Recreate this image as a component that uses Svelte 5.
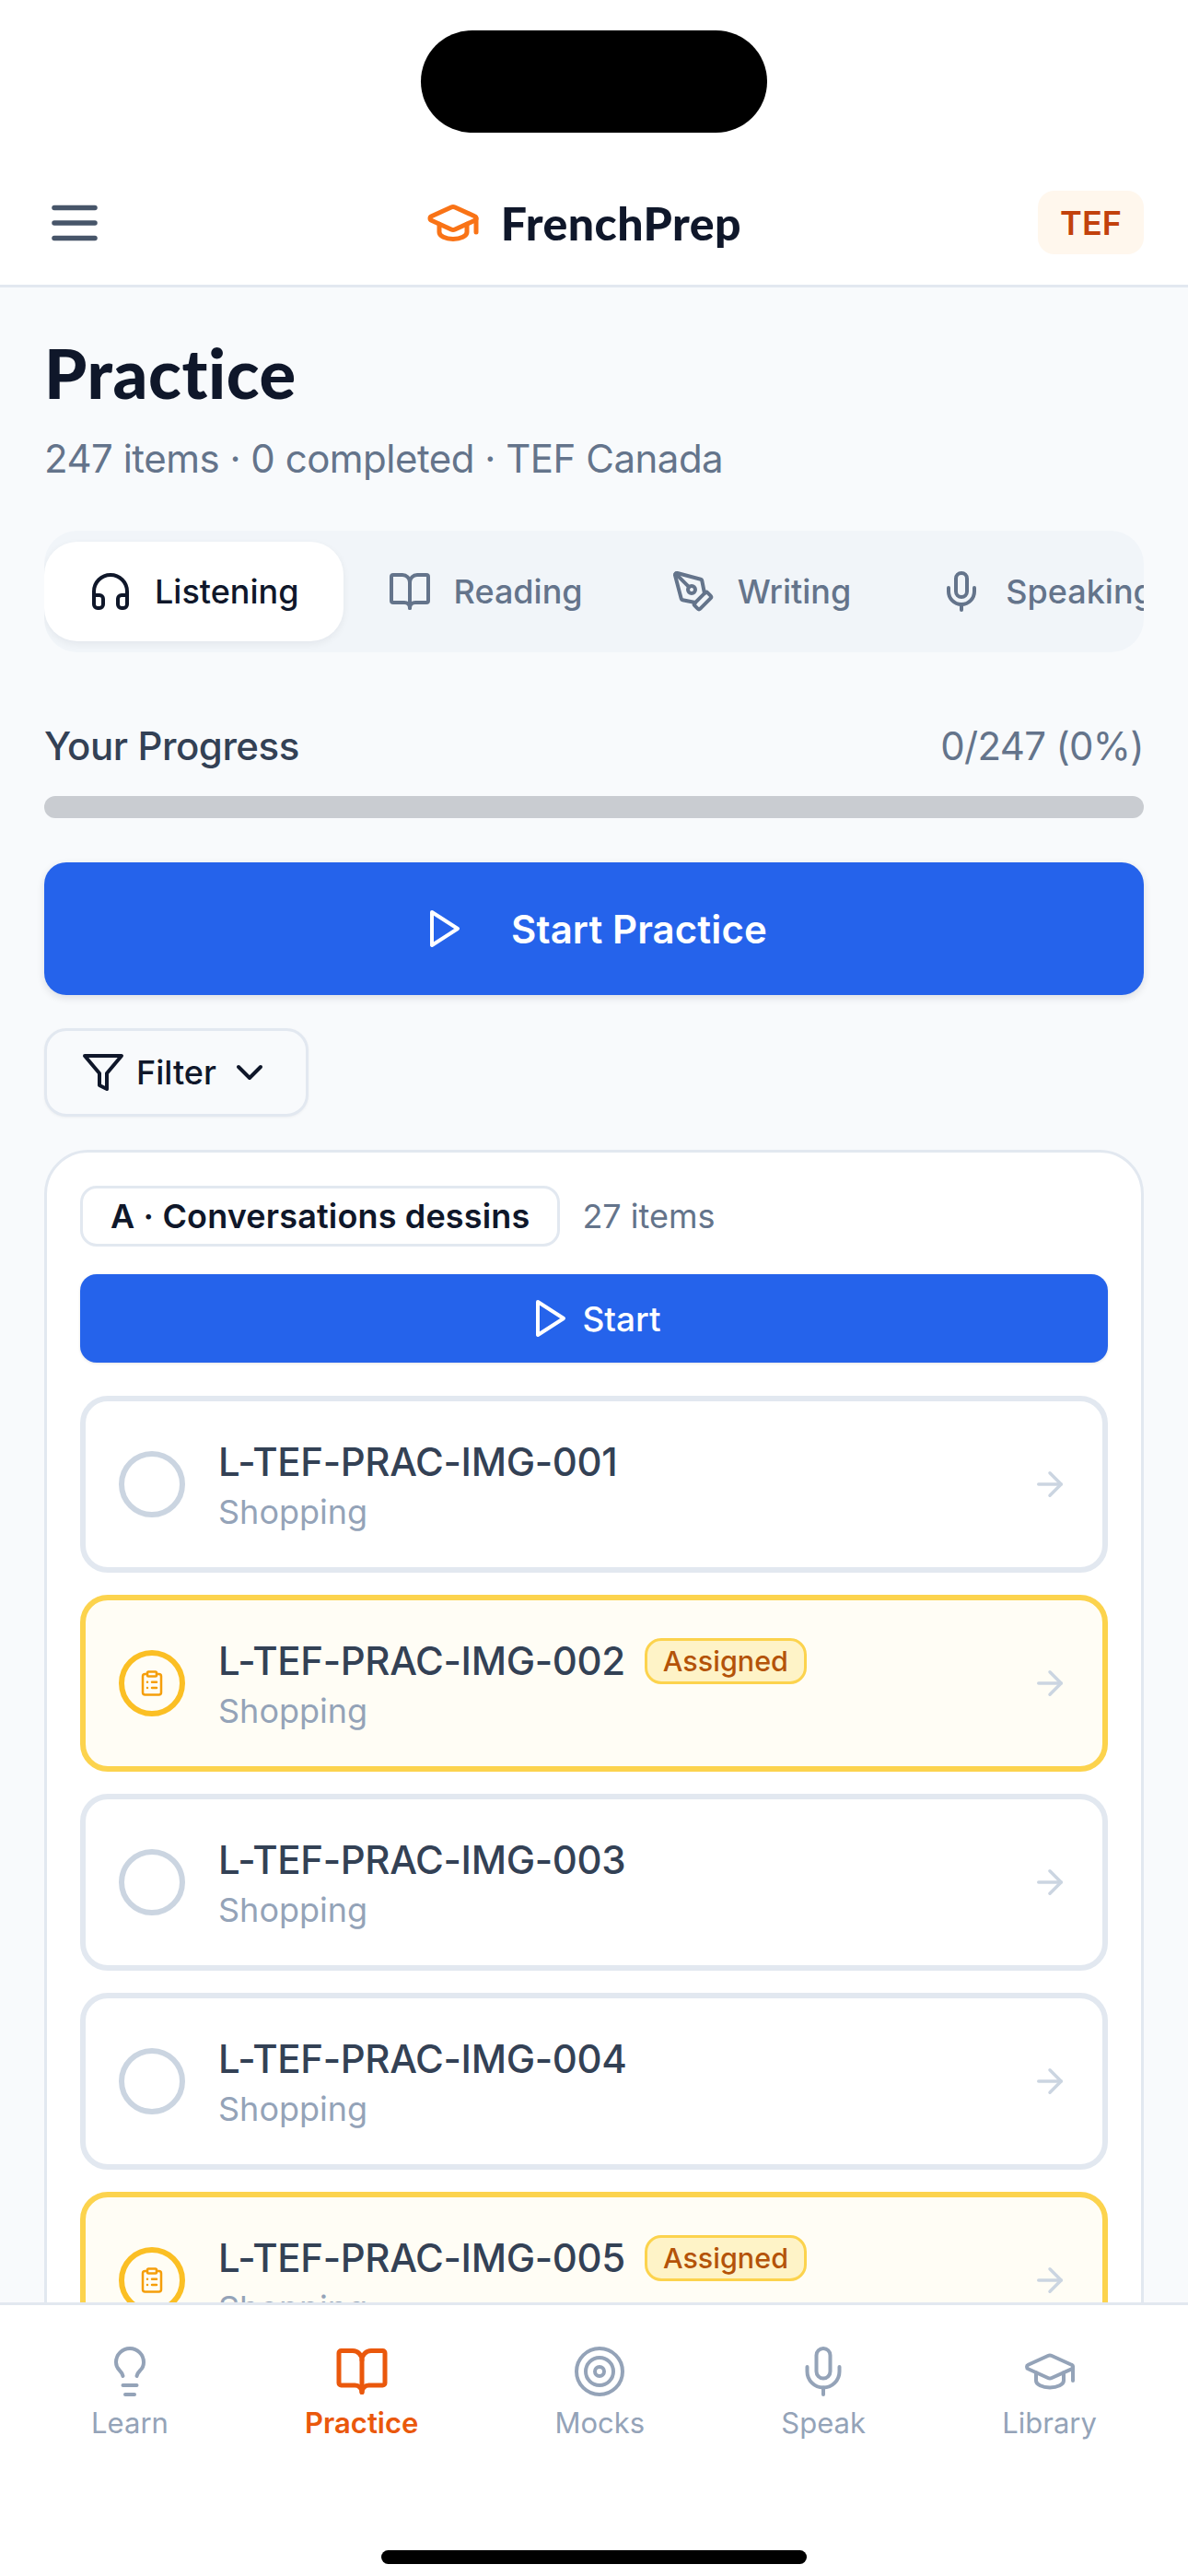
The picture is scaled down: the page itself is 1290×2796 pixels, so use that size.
<script>
	// Practice screen of FrenchPrep; sizes are the 3x device pixels of the screenshot.
	const icons = {
		menu: '<path d="M4 6h16"/><path d="M4 12h16"/><path d="M4 18h16"/>',
		cap: '<path d="M21.42 10.922a1 1 0 0 0-.019-1.838L12.83 5.18a2 2 0 0 0-1.66 0L2.6 9.08a1 1 0 0 0 0 1.832l8.57 3.908a2 2 0 0 0 1.66 0z"/><path d="M22 10v6"/><path d="M6 12.5V16a6 3 0 0 0 12 0v-3.5"/>',
		headphones: '<path d="M3 14h3a2 2 0 0 1 2 2v3a2 2 0 0 1-2 2H5a2 2 0 0 1-2-2v-7a9 9 0 0 1 18 0v7a2 2 0 0 1-2 2h-1a2 2 0 0 1-2-2v-3a2 2 0 0 1 2-2h3"/>',
		book: '<path d="M12 7v14"/><path d="M3 18a1 1 0 0 1-1-1V4a1 1 0 0 1 1-1h5a4 4 0 0 1 4 4 4 4 0 0 1 4-4h5a1 1 0 0 1 1 1v13a1 1 0 0 1-1 1h-6a3 3 0 0 0-3 3 3 3 0 0 0-3-3z"/>',
		pen: '<path d="M15.707 21.293a1 1 0 0 1-1.414 0l-1.586-1.586a1 1 0 0 1 0-1.414l5.586-5.586a1 1 0 0 1 1.414 0l1.586 1.586a1 1 0 0 1 0 1.414z"/><path d="m18 13-1.375-6.874a1 1 0 0 0-.746-.776L3.235 2.028a1 1 0 0 0-1.207 1.207L5.35 15.879a1 1 0 0 0 .776.746L13 18"/><path d="m2.3 2.3 7.286 7.286"/><circle cx="11" cy="11" r="2"/>',
		mic: '<path d="M12 2a3 3 0 0 0-3 3v7a3 3 0 0 0 6 0V5a3 3 0 0 0-3-3Z"/><path d="M19 10v2a7 7 0 0 1-14 0v-2"/><path d="M12 19v3"/>',
		play: '<polygon points="6 3 20 12 6 21 6 3"/>',
		filter: '<polygon points="22 3 2 3 10 12.46 10 19 14 21 14 12.46 22 3"/>',
		chevron: '<path d="m6 9 6 6 6-6"/>',
		arrow: '<path d="M5 12h14"/><path d="m12 5 7 7-7 7"/>',
		clipboard: '<rect width="8" height="4" x="8" y="2" rx="1" ry="1"/><path d="M16 4h2a2 2 0 0 1 2 2v14a2 2 0 0 1-2 2H6a2 2 0 0 1-2-2V6a2 2 0 0 1 2-2h2"/><path d="M12 11h4"/><path d="M12 16h4"/><path d="M8 11h.01"/><path d="M8 16h.01"/>',
		bulb: '<path d="M15 14c.2-1 .7-1.7 1.5-2.5 1-.9 1.5-2.2 1.5-3.5A6 6 0 0 0 6 8c0 1 .2 2.2 1.5 3.5.7.7 1.3 1.5 1.5 2.5"/><path d="M9 18h6"/><path d="M10 22h4"/>',
		target: '<circle cx="12" cy="12" r="10"/><circle cx="12" cy="12" r="6"/><circle cx="12" cy="12" r="2"/>'
	};

	const tabs = [
		{ label: 'Listening', icon: 'headphones', active: true },
		{ label: 'Reading', icon: 'book' },
		{ label: 'Writing', icon: 'pen' },
		{ label: 'Speaking', icon: 'mic' }
	];

	const items = [
		{ code: 'L-TEF-PRAC-IMG-001', assigned: false },
		{ code: 'L-TEF-PRAC-IMG-002', assigned: true },
		{ code: 'L-TEF-PRAC-IMG-003', assigned: false },
		{ code: 'L-TEF-PRAC-IMG-004', assigned: false },
		{ code: 'L-TEF-PRAC-IMG-005', assigned: true }
	];

	const navLinks = [
		{ label: 'Learn', icon: 'bulb' },
		{ label: 'Practice', icon: 'book', active: true },
		{ label: 'Mocks', icon: 'target' },
		{ label: 'Speak', icon: 'mic' },
		{ label: 'Library', icon: 'cap' }
	];
</script>

{#snippet icon(name, cls)}
	<svg class={cls} viewBox="0 0 24 24" fill="none" stroke="currentColor" stroke-width="2" stroke-linecap="round" stroke-linejoin="round">
		{@html icons[name]}
	</svg>
{/snippet}

<div class="screen">
	<header>
		<div class="island"></div>
		<div class="topbar">
			{@render icon('menu', 'menu-icon')}
			<div class="logo">
				{@render icon('cap', 'logo-icon')}
				<span>FrenchPrep</span>
			</div>
			<span class="exam">TEF</span>
		</div>
	</header>

	<main>
		<h1>Practice</h1>
		<p class="summary">247 items · 0 completed · TEF Canada</p>

		<div class="tabs">
			{#each tabs as tab}
				<div class="tab" class:active={tab.active}>
					{@render icon(tab.icon, 'tab-icon')}
					<span>{tab.label}</span>
				</div>
			{/each}
		</div>

		<div class="progress-row">
			<span>Your Progress</span>
			<span class="progress-count">0/247 (0%)</span>
		</div>
		<div class="progress-bar"></div>

		<button class="start-practice">
			{@render icon('play', 'icon-48')}
			<span>Start Practice</span>
		</button>

		<button class="filter">
			{@render icon('filter', 'icon-48')}
			<span>Filter</span>
			{@render icon('chevron', 'icon-48')}
		</button>

		<section class="card">
			<div class="card-head">
				<span class="chip">A · Conversations dessins</span>
				<span class="count">27 items</span>
			</div>
			<button class="start">
				{@render icon('play', 'icon-48')}
				<span>Start</span>
			</button>
			<div class="list">
				{#each items as item}
					<div class="item" class:assigned={item.assigned}>
						<div class="status">
							{#if item.assigned}
								{@render icon('clipboard', 'status-icon')}
							{/if}
						</div>
						<div class="item-body">
							<div class="item-title">
								<span>{item.code}</span>
								{#if item.assigned}
									<span class="badge">Assigned</span>
								{/if}
							</div>
							<div class="item-sub">Shopping</div>
						</div>
						{@render icon('arrow', 'item-arrow')}
					</div>
				{/each}
			</div>
		</section>
	</main>

	<nav>
		<div class="nav-links">
			{#each navLinks as link}
				<div class="nav-link" class:active={link.active}>
					{@render icon(link.icon, 'nav-icon')}
					<span>{link.label}</span>
				</div>
			{/each}
		</div>
		<div class="home-bar"></div>
	</nav>
</div>

<style>
	:global(body) {
		margin: 0;
		background: #f8fafc;
	}

	.screen {
		width: 1290px;
		height: 2796px;
		display: flex;
		flex-direction: column;
		overflow: hidden;
		background: #f8fafc;
		font-family: Inter, "Liberation Sans", sans-serif;
	}

	:global(.icon-48) {
		width: 48px;
		height: 48px;
		flex-shrink: 0;
	}

	header {
		flex-shrink: 0;
		height: 312px;
		box-sizing: border-box;
		padding-top: 33px;
		background: #fff;
		border-bottom: 3px solid #e2e8f0;
	}

	.island {
		width: 376px;
		height: 111px;
		margin: 0 auto;
		border-radius: 56px;
		background: #000;
	}

	.topbar {
		display: flex;
		align-items: center;
		justify-content: space-between;
		height: 69px;
		margin-top: 63px;
		padding: 0 48px;
	}

	:global(.menu-icon) {
		width: 66px;
		height: 66px;
		color: #475569;
	}

	.logo {
		display: flex;
		align-items: center;
		gap: 22px;
		margin-left: 26px;
		font-family: Lato, Inter, sans-serif;
		font-size: 50px;
		font-weight: 900;
		letter-spacing: 0.5px;
		color: #0f172a;
	}

	:global(.logo-icon) {
		width: 60px;
		height: 60px;
		color: #f97316;
	}

	.exam {
		width: 115px;
		height: 69px;
		display: flex;
		align-items: center;
		justify-content: center;
		border-radius: 18px;
		background: #fff7ed;
		color: #c2410c;
		font-size: 36px;
		font-weight: 600;
	}

	main {
		flex: 1;
		min-height: 0;
		overflow: hidden;
		padding: 48px 48px 0;
	}

	h1 {
		margin: 0;
		font-family: Lato, Inter, sans-serif;
		font-size: 74px;
		line-height: 90px;
		font-weight: 900;
		letter-spacing: 0.6px;
		color: #0f172a;
	}

	.summary {
		margin: 18px 0 0;
		font-size: 42px;
		line-height: 60px;
		letter-spacing: -0.5px;
		color: #64748b;
	}

	.tabs {
		display: flex;
		margin-top: 48px;
		padding: 12px 0;
		overflow: hidden;
		border-radius: 36px;
		background: #f1f5f9;
	}

	.tab {
		flex-shrink: 0;
		height: 108px;
		display: flex;
		align-items: center;
		gap: 24px;
		padding: 0 48px;
		border-radius: 36px;
		font-size: 36px;
		font-weight: 450;
		color: #64748b;
	}

	.tab.active {
		background: #fff;
		color: #0f172a;
		font-weight: 500;
		box-shadow: 0 3px 9px rgba(15, 23, 42, 0.06);
	}

	:global(.tab-icon) {
		width: 48px;
		height: 48px;
	}

	.progress-row {
		display: flex;
		justify-content: space-between;
		margin-top: 72px;
		font-size: 42px;
		line-height: 60px;
		font-weight: 450;
		letter-spacing: -0.45px;
		color: #334155;
	}

	.progress-count {
		font-weight: 400;
		letter-spacing: -0.7px;
		color: #64748b;
	}

	.progress-bar {
		height: 24px;
		margin-top: 24px;
		border-radius: 12px;
		background: #c9ccd1;
	}

	button {
		font-family: inherit;
		cursor: pointer;
	}

	.start-practice {
		width: 100%;
		height: 144px;
		margin-top: 48px;
		display: flex;
		align-items: center;
		justify-content: center;
		gap: 50px;
		border: 0;
		border-radius: 24px;
		background: #2563eb;
		color: #fff;
		font-size: 42px;
		font-weight: 600;
		letter-spacing: 0.1px;
		box-shadow: 0 3px 9px rgba(15, 23, 42, 0.12);
	}

	.filter {
		height: 96px;
		margin-top: 36px;
		display: flex;
		align-items: center;
		gap: 12px;
		padding: 0 37px;
		border: 3px solid #e2e8f0;
		border-radius: 24px;
		background: #f8fafc;
		color: #0f172a;
		font-size: 36px;
		font-weight: 500;
		box-shadow: 0 1px 3px rgba(15, 23, 42, 0.05);
	}

	.card {
		margin-top: 36px;
		padding: 36px;
		border: 3px solid #e2e8f0;
		border-radius: 48px;
		background: #fff;
	}

	.card-head {
		display: flex;
		align-items: center;
		gap: 24px;
	}

	.chip {
		height: 60px;
		display: flex;
		align-items: center;
		padding: 0 30px;
		border: 3px solid #e2e8f0;
		border-radius: 18px;
		color: #0f172a;
		font-size: 36px;
		font-weight: 600;
		letter-spacing: 0.15px;
	}

	.count {
		color: #64748b;
		font-size: 36px;
	}

	.start {
		width: 100%;
		height: 96px;
		margin-top: 30px;
		display: flex;
		align-items: center;
		justify-content: center;
		gap: 12px;
		border: 0;
		border-radius: 18px;
		background: #2563eb;
		color: #fff;
		font-size: 37px;
		font-weight: 500;
		box-shadow: 0 1px 3px rgba(15, 23, 42, 0.12);
	}

	.list {
		display: flex;
		flex-direction: column;
		gap: 24px;
		margin-top: 36px;
	}

	.item {
		height: 192px;
		box-sizing: border-box;
		display: flex;
		align-items: center;
		gap: 36px;
		padding: 0 36px;
		border: 6px solid #e2e8f0;
		border-radius: 30px;
		background: #fff;
	}

	.item.assigned {
		border-color: #fcd34d;
		background: #fffdf5;
	}

	.status {
		width: 72px;
		height: 72px;
		box-sizing: border-box;
		flex-shrink: 0;
		display: flex;
		align-items: center;
		justify-content: center;
		border: 6px solid #cbd5e1;
		border-radius: 50%;
	}

	.assigned .status {
		border-color: #fbbf24;
	}

	:global(.status-icon) {
		width: 30px;
		height: 30px;
		color: #f59e0b;
	}

	.item-body {
		flex: 1;
		min-width: 0;
		padding-top: 3px;
	}

	.item-title {
		display: flex;
		align-items: center;
		gap: 21px;
		font-size: 42px;
		line-height: 54px;
		font-weight: 450;
		letter-spacing: -0.35px;
		color: #334155;
	}

	.badge {
		height: 50px;
		box-sizing: border-box;
		display: flex;
		align-items: center;
		padding: 0 17px;
		border: 3px solid #fcd34d;
		border-radius: 18px;
		background: #fef3c7;
		color: #b45309;
		font-size: 30.5px;
		line-height: 1;
		letter-spacing: 0;
	}

	.item-sub {
		margin-top: 3px;
		font-size: 36px;
		line-height: 48px;
		color: #94a3b8;
	}

	:global(.item-arrow) {
		width: 42px;
		height: 42px;
		flex-shrink: 0;
		color: #cbd5e1;
	}

	nav {
		flex-shrink: 0;
		height: 297px;
		box-sizing: border-box;
		border-top: 3px solid #e2e8f0;
		background: #fff;
	}

	.nav-links {
		display: flex;
		justify-content: space-around;
		padding: 42px 25px 0;
	}

	.nav-link {
		display: flex;
		flex-direction: column;
		align-items: center;
		gap: 5px;
		font-size: 31px;
		line-height: 42px;
		font-weight: 400;
		color: #94a3b8;
	}

	.nav-link.active {
		color: #ea580c;
		font-weight: 600;
	}

	:global(.nav-icon) {
		width: 60px;
		height: 60px;
		stroke-width: 1.6;
	}

	.nav-link.active :global(.nav-icon) {
		stroke-width: 2;
	}

	.home-bar {
		width: 462px;
		height: 15px;
		margin: 117px auto 0;
		border-radius: 8px;
		background: #000;
	}
</style>
